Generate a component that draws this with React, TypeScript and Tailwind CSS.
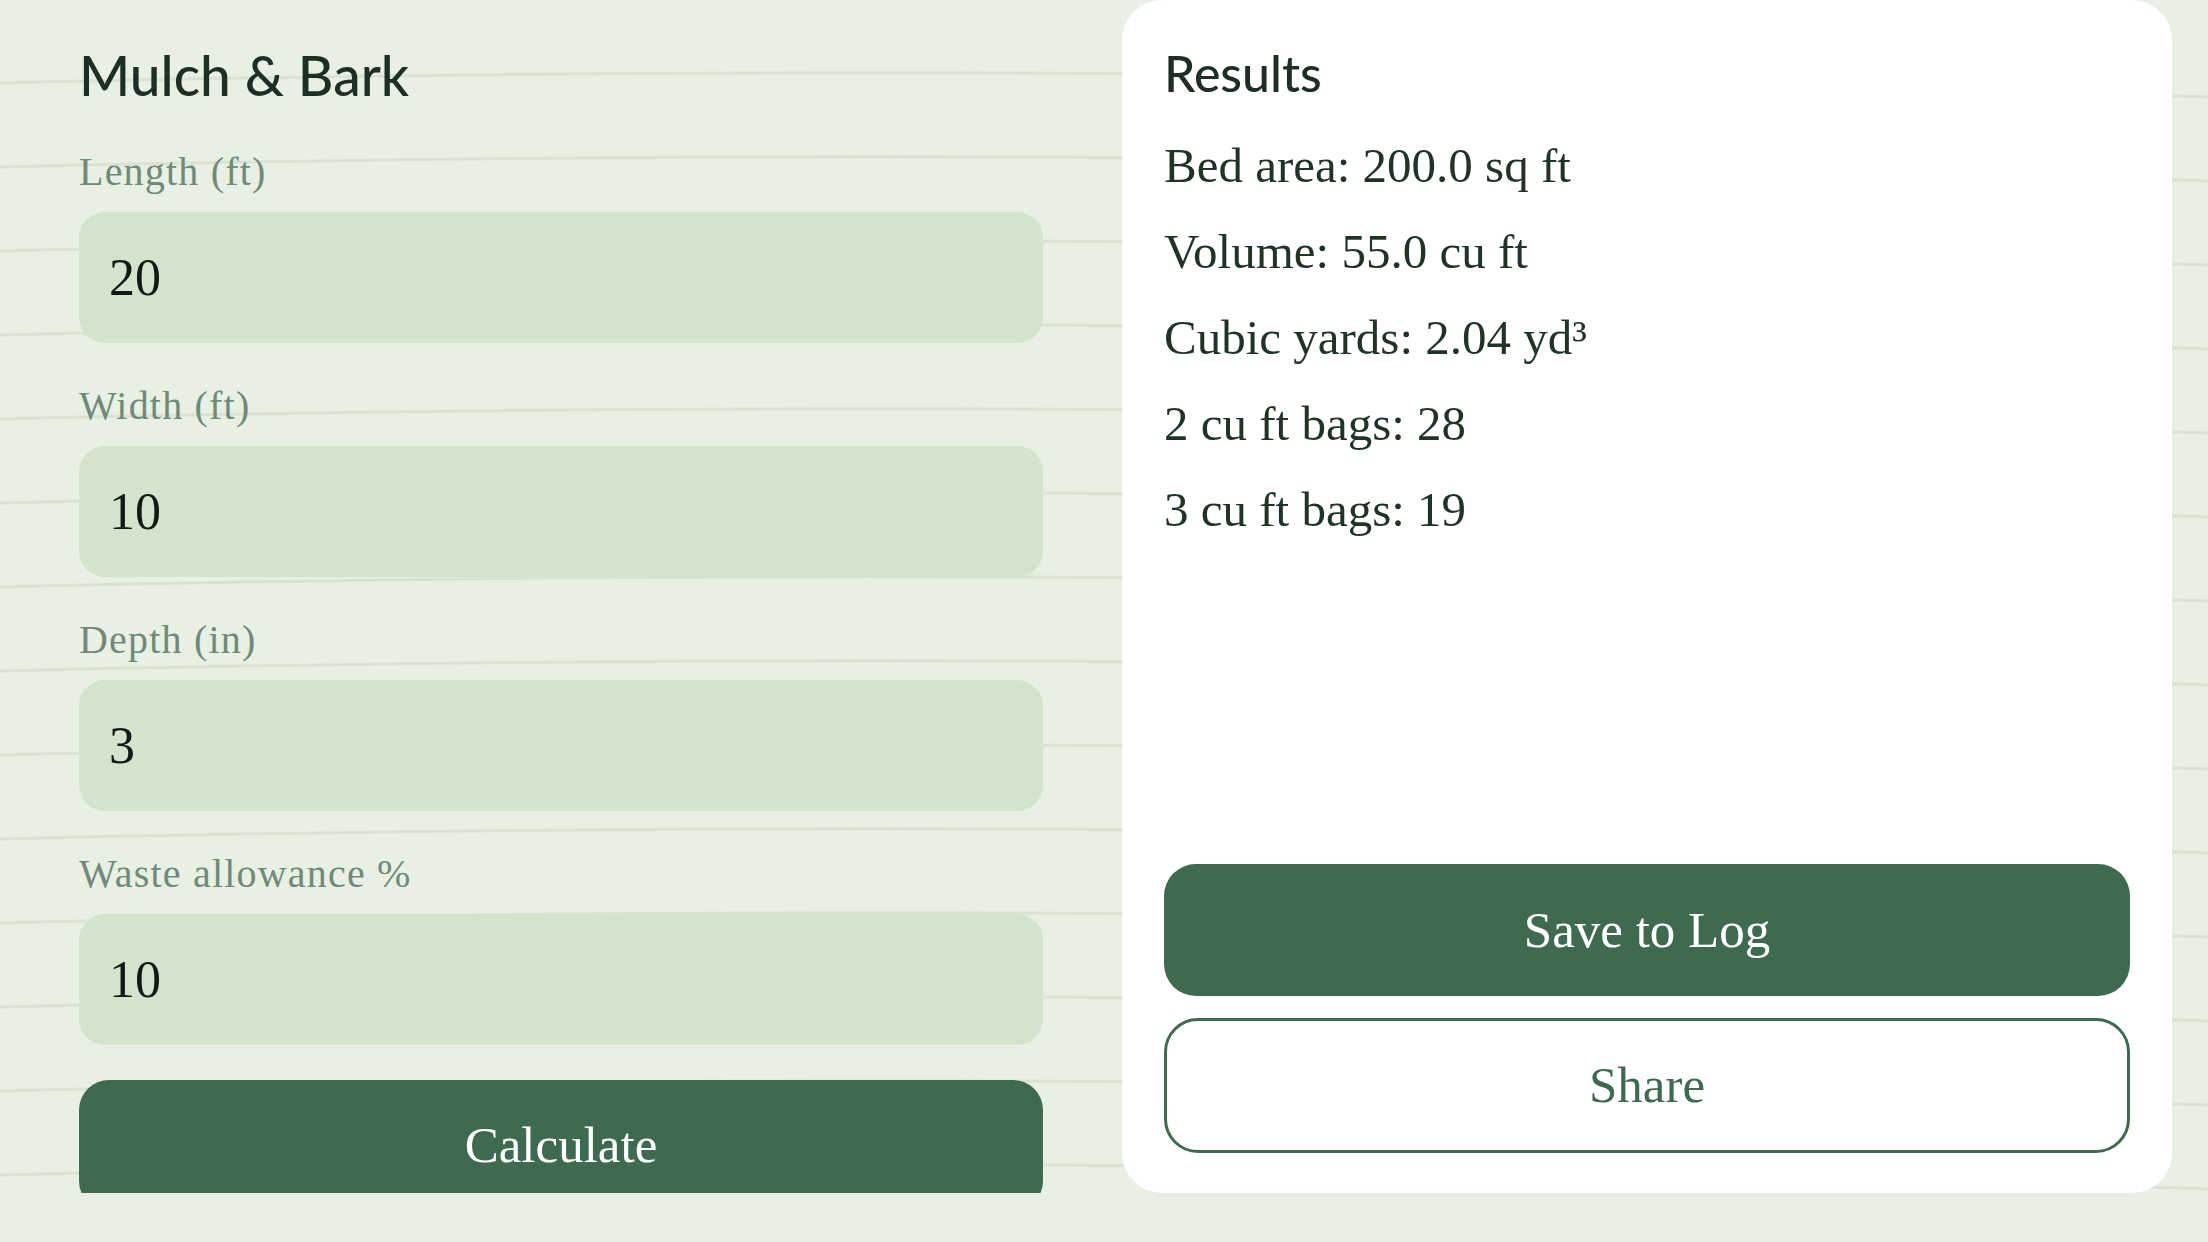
import React from 'react'

const fields = [
  { label: 'Length (ft)', value: '20' },
  { label: 'Width (ft)', value: '10' },
  { label: 'Depth (in)', value: '3' },
  { label: 'Waste allowance %', value: '10' },
]

const results = [
  'Bed area: 200.0 sq ft',
  'Volume: 55.0 cu ft',
  'Cubic yards: 2.04 yd³',
  '2 cu ft bags: 28',
  '3 cu ft bags: 19',
]

const ruleLines = [83, 167, 251, 335, 419, 503, 587, 671, 755, 839, 923, 1007, 1091, 1175]

function PaperLines() {
  return (
    <svg className="absolute inset-0 pointer-events-none" width="2208" height="1242" viewBox="0 0 2208 1242">
      {ruleLines.map((y) => (
        <path
          key={y}
          d={`M0 ${y} Q 1104 ${y - 26} 2208 ${y + 14}`}
          fill="none"
          stroke="#d9e2d3"
          strokeWidth="3"
        />
      ))}
    </svg>
  )
}

function Field({ label, value }: { label: string; value: string }) {
  return (
    <div className="flex flex-col">
      <label className="text-[40px] leading-none tracking-[0.03em] text-[#6f8a78] mb-5">{label}</label>
      <input
        readOnly
        defaultValue={value}
        className="h-[131px] w-full rounded-[26px] bg-[#d4e3cb] px-[30px] text-[52px] text-[#111a14] outline-none"
      />
    </div>
  )
}

export default function App() {
  return (
    <div
      className="relative w-[2208px] h-[1242px] overflow-hidden bg-[#e8efe3]"
      style={{ fontFamily: '"Liberation Serif", serif' }}
    >
      <PaperLines />
      <div className="relative flex items-start">
        {/* form column */}
        <div className="w-[1122px] h-[1193px] overflow-hidden px-[79px] pt-[48px]">
          <h1 className="font-['Lato',sans-serif] font-medium text-[55px] leading-none text-[#1d2e24]">
            Mulch &amp; Bark
          </h1>
          <div className="mt-[49px] flex flex-col gap-[43px]">
            {fields.map((f) => (
              <Field key={f.label} label={f.label} value={f.value} />
            ))}
          </div>
          <button className="mt-[35px] h-[131px] w-full rounded-[30px] bg-[#3e6b50] text-[51px] text-white">
            Calculate
          </button>
        </div>

        {/* results card */}
        <div className="w-[1050px] h-[1193px] rounded-[40px] bg-white px-[42px] pt-[48px] pb-[40px] flex flex-col">
          <h2 className="font-['Lato',sans-serif] font-medium text-[50px] leading-none text-[#1d2e24]">Results</h2>
          <div className="mt-[25px] flex flex-col">
            {results.map((r) => (
              <p key={r} className="text-[49px] leading-[86px] text-[#1f3326]">
                {r}
              </p>
            ))}
          </div>
          <div className="flex-1" />
          <div className="flex flex-col gap-[22px]">
            <button className="h-[132px] w-full rounded-[32px] bg-[#3e6b50] text-[51px] text-white">
              Save to Log
            </button>
            <button className="h-[135px] w-full rounded-[34px] border-[3px] border-[#3e6b50] bg-white text-[51px] text-[#3e6b50]">
              Share
            </button>
          </div>
        </div>
      </div>
    </div>
  )
}
